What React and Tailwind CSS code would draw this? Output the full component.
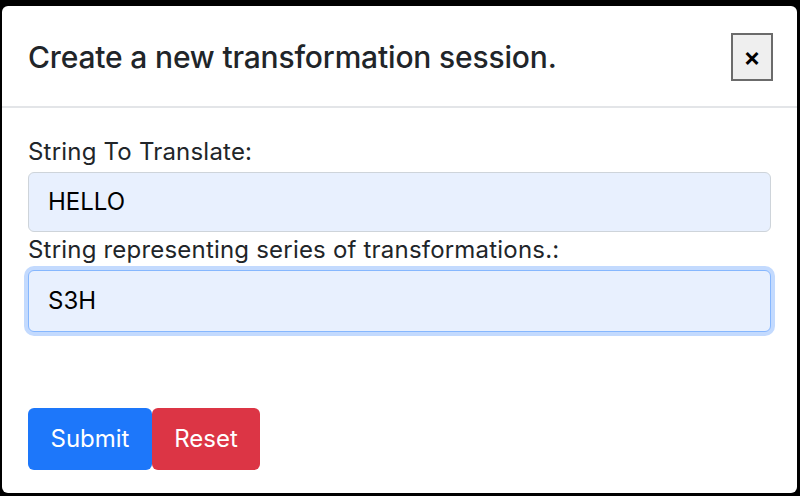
export default function App() {
  return (
    <div className="h-[496px] w-[800px] bg-black pt-[6px] pl-[2px] pr-[3px] pb-[3px] font-['Inter',sans-serif] text-[#212529]">
      <div className="flex h-full flex-col rounded-[6px] bg-white">
        <div className="flex h-[102px] items-center justify-between border-b-2 border-[#e3e5e8] pl-[26px] pr-[24px] pt-[2px]">
          <h5 className="text-[30px] font-medium leading-[45px] tracking-[-0.17px]">Create a new transformation session.</h5>
          <button className="flex h-[48px] w-[42px] items-center justify-center border-2 border-[#6b6b6b] bg-[#efefef] text-[26px] font-semibold leading-none text-black">
            ×
          </button>
        </div>
        <div className="flex flex-col px-[26px] pt-[26px]">
          <label className="mb-[2px] text-[24px] leading-[36px] tracking-[0.2px]">String To Translate:</label>
          <div className="flex h-[60px] items-center rounded-[6px] border-[1.5px] border-[#ced4da] bg-[#e8f0fe] px-[19px] text-[24px] text-black">
            HELLO
          </div>
          <label className="mb-[2px] text-[24px] leading-[36px] tracking-[0.2px]">String representing series of transformations.:</label>
          <div className="flex h-[62px] items-center rounded-[6px] border-[1.5px] border-[#86b7fe] bg-[#e8f0fe] px-[19px] text-[24px] text-black shadow-[0_0_0_4px_#c3dafe]">
            S3H
          </div>
          <div className="mt-[76px] flex">
            <button className="h-[62px] w-[124px] rounded-[6px] bg-[#1d77fa] text-[24px] text-white">Submit</button>
            <button className="h-[62px] w-[108px] rounded-[6px] bg-[#dc3545] text-[24px] text-white">Reset</button>
          </div>
        </div>
      </div>
    </div>
  );
}
